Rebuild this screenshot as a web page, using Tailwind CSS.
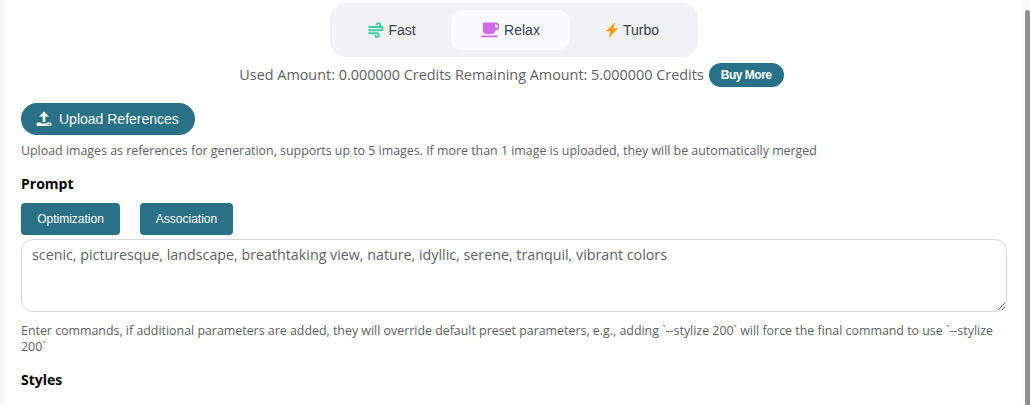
<!DOCTYPE html>
<html lang="en">
<head>
<meta charset="UTF-8" />
<title>Generate</title>
<script src="https://cdn.jsdelivr.net/npm/@tailwindcss/browser@4"></script>
</head>
<body class="bg-white overflow-hidden font-['Open_Sans',sans-serif]">
<div class="flex h-[405px] w-[1030px]">
	<div class="w-[5px] bg-[#f7f7f7] shrink-0"></div>
	<main class="flex-1 min-w-0 pl-4 pr-4 pt-[3px]">
		<div class="flex justify-center">
			<div class="flex w-[368px] h-[54px] px-[7px] py-[7px] rounded-2xl bg-[#f1f2f4] font-['Liberation_Sans',sans-serif] text-sm text-[#3b4150]">
				<div class="flex w-[114px] pr-1 items-center justify-center gap-[2px]">
					<svg class="w-4 h-4" viewBox="0 0 16 16" fill="none" stroke="#3ecfa5" stroke-width="1.9" stroke-linecap="round"><path d="M1 5h9.5a1.9 1.9 0 1 0-1.8-2.8"/><path d="M1 8.2h12a1.7 1.7 0 1 0-1.6-2.6"/><path d="M1 11.2h8a1.9 1.9 0 1 1-1.8 2.8"/></svg>
					<span class="ml-[2px]">Fast</span>
				</div>
				<div class="flex w-[119px] items-center justify-center gap-[5px] rounded-xl bg-[#fafbff]">
					<svg class="w-[18px] h-4" viewBox="0 0 18 16" fill="#d268ea"><path d="M2 0.5h12v8a3.5 3.5 0 0 1-3.5 3.5H5.5A3.5 3.5 0 0 1 2 8.500z"/><path fill="none" stroke="#d268ea" stroke-width="1.8" d="M14 1.500h1a2.200 2.200 0 0 1 0 5.500H14"/><rect x="0" y="13.400" width="17" height="1.800" rx=".9"/></svg>
					<span>Relax</span>
				</div>
				<div class="flex flex-1 pl-[2px] items-center justify-center gap-[3px]">
					<svg class="w-4 h-4" viewBox="0 0 16 16" fill="#fb9a0e"><path d="M11.500 0 2 9.300h4.800L4.500 16 14.200 6.300H9.300z"/></svg>
					<span>Turbo</span>
				</div>
			</div>
		</div>
		<div class="flex justify-center items-center gap-[5px] mt-[6px] mr-[5px] h-6 text-[14.4px] text-[#606266]">
			<span>Used Amount: 0.000000 Credits Remaining Amount: 5.000000 Credits</span>
			<button class="h-6 w-[75px] rounded-full bg-[#297187] text-white text-xs font-bold tracking-[-0.5px] font-['Liberation_Sans',sans-serif]">Buy More</button>
		</div>
		<button class="flex items-center gap-[7px] mt-[16px] h-8 w-[174px] pl-[15px] rounded-full bg-[#297187] text-white text-sm font-['Liberation_Sans',sans-serif]">
			<svg class="w-4 h-4" viewBox="0 0 16 16" fill="#fff"><path d="M8 .5 12.800 5.500H9.300V11H6.700V5.500H3.200z"/><path fill-rule="evenodd" d="M1.500 11.500h3.700v1h5.600v-1h3.700q.9 0 .9.900v1.700q0 .9-.9.900H1.500q-.9 0-.9-.9v-1.700q0-.9.900-.9zM11.500 13v1h1v-1zM13.200 13v1h1v-1z"/></svg>
			<span>Upload References</span>
		</button>
		<p class="mt-[6px] text-[12.4px] leading-[20px] text-[#606266]">Upload images as references for generation, supports up to 5 images. If more than 1 image is uploaded, they will be automatically merged</p>
		<h2 class="mt-[11px] text-sm font-bold leading-[24px] text-black">Prompt</h2>
		<div class="flex gap-5 mt-[7px] font-['Liberation_Sans',sans-serif] text-xs text-white">
			<button class="h-8 w-[99px] rounded bg-[#297187]">Optimization</button>
			<button class="h-8 w-[93px] rounded bg-[#297187]">Association</button>
		</div>
		<textarea class="block mt-1 w-full h-[73px] px-[10px] py-[5px] rounded-xl border border-[#d4d7e0] text-[14.27px] leading-[20px] text-[#606266] outline-none">scenic, picturesque, landscape, breathtaking view, nature, idyllic, serene, tranquil, vibrant colors</textarea>
		<p class="mt-[11px] text-[12.4px] leading-[16px] text-[#606266]">Enter commands, if additional parameters are added, they will override default preset parameters, e.g., adding `--stylize 200` will force the final command to use `--stylize 200`</p>
		<h2 class="mt-[13px] text-sm font-bold leading-[24px] text-black">Styles</h2>
	</main>
	<div class="w-[7px] shrink-0 bg-[#fafafa] pt-[10px] pl-[2px]">
		<div class="h-full rounded-t bg-[#909090]"></div>
	</div>
</div>
</body>
</html>
